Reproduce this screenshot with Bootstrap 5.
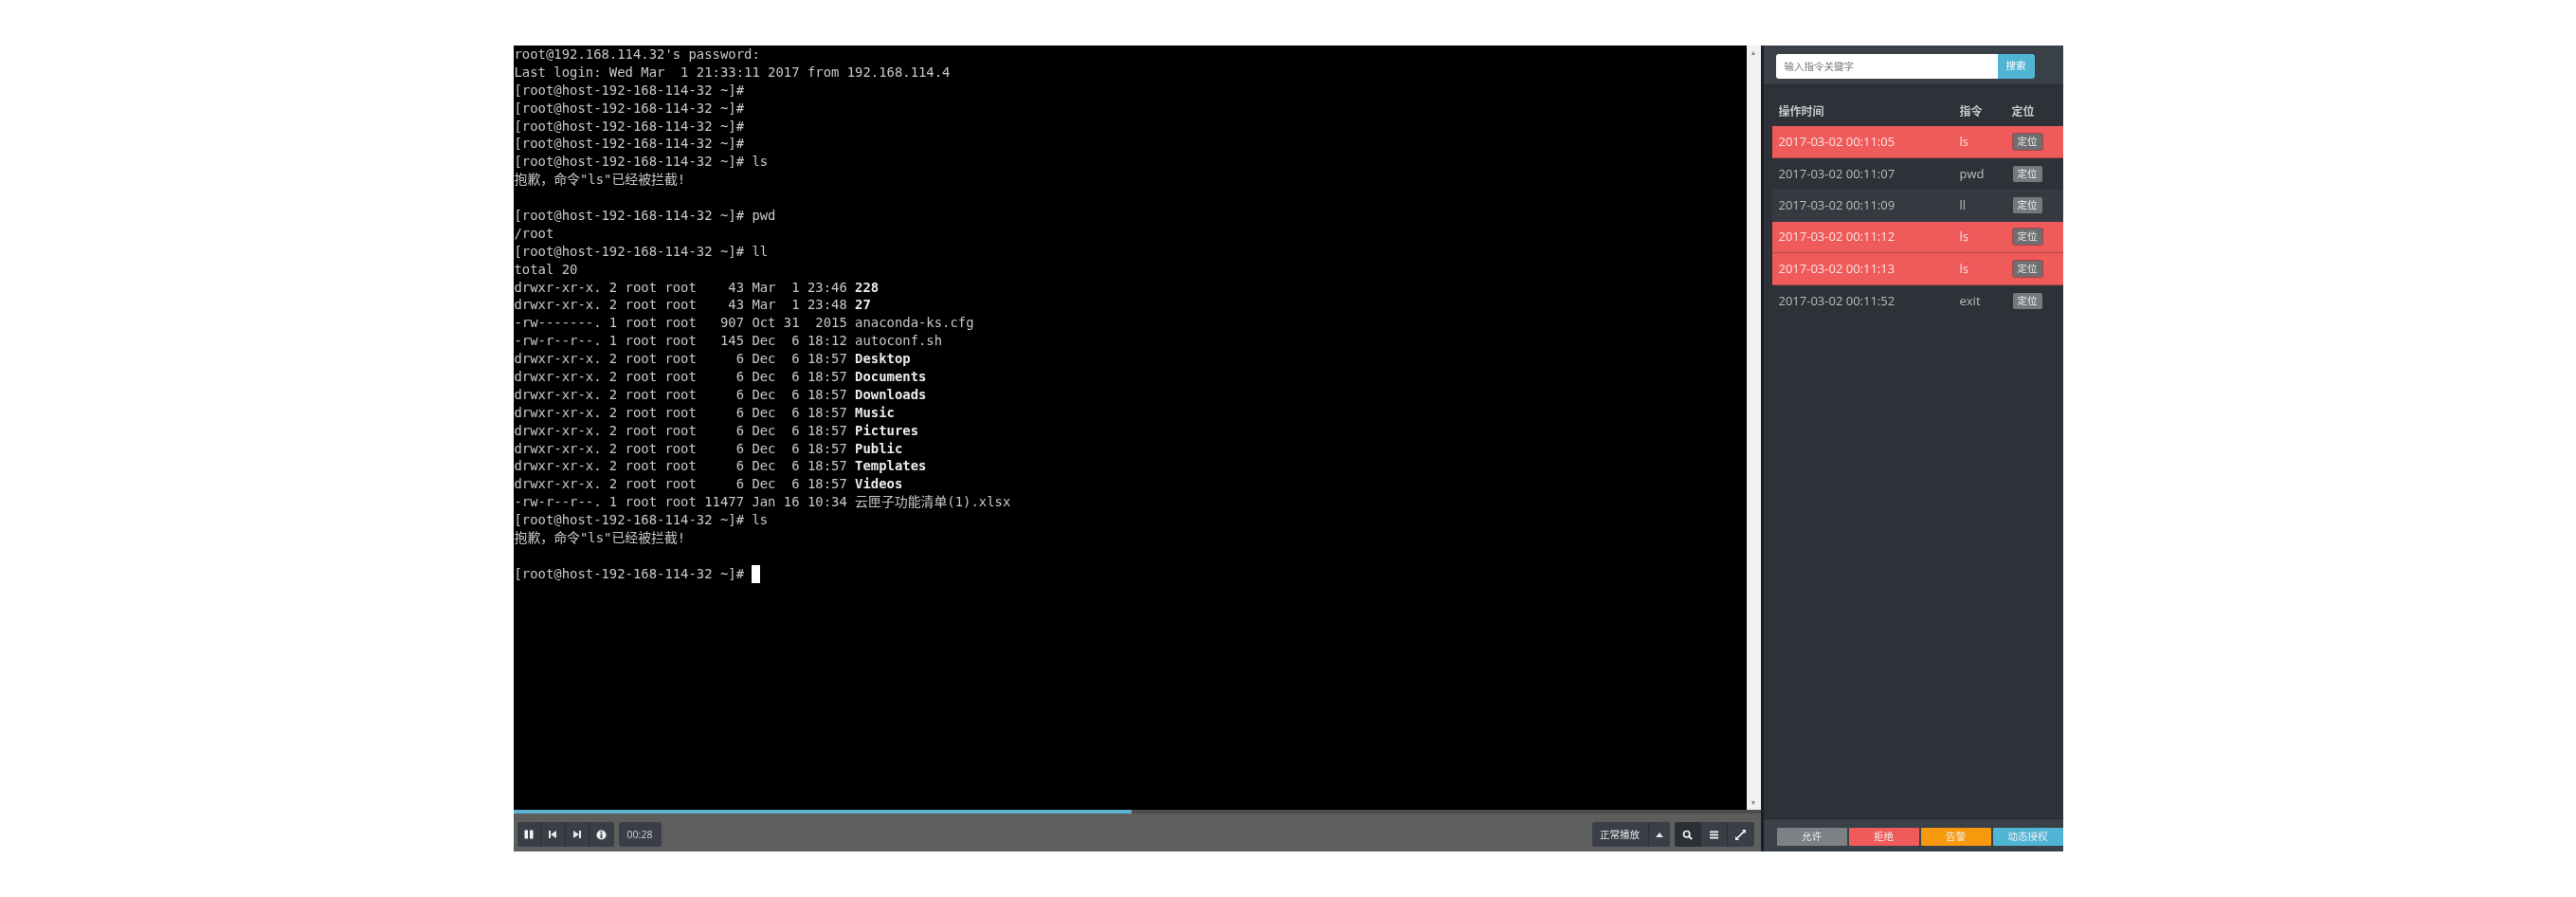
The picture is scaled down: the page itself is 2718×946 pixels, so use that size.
<!DOCTYPE html>
<html lang="zh">
<head>
<meta charset="utf-8">
<title>录像回放</title>
<link href="https://cdn.jsdelivr.net/npm/bootstrap@5.3.0/dist/css/bootstrap.min.css" rel="stylesheet">
<style>
body{background:#fff;margin:0;padding-top:48px;}
.rp-window{width:1635px;height:850px;margin:0 auto;filter:blur(.45px);}
.rp-main{width:1316px;}
.rp-screen{background:#000;min-height:0;}
.rp-term{padding-left:1px;font:13.9px/18.9px "DejaVu Sans Mono","Noto Sans CJK SC",monospace;color:#c8c8c8;}
.rp-ln{height:18.9px;white-space:pre;overflow:hidden;}
.rp-ln b{color:#ececec;font-weight:700;}
.rp-cursor{display:inline-block;width:9px;height:19px;background:#fff;vertical-align:top;}
.rp-scroll{width:15px;background:#f1f1f1;}
.rp-sarrow{height:15px;color:#8a8a8a;font-size:7px;line-height:15px;text-align:center;}
.rp-progress{height:4px;background:#4d4d4d;}
.rp-progress-fill{height:4px;background:#5bb5d0;width:49.6%;}
.rp-ctrl{height:40px;background:#5e5e5e;padding:9px 7px 5px 4px;}
.rp-gap{gap:5px;}
.rp-group{background:#3a3f47;border-radius:3px;height:26px;overflow:hidden;}
.rp-cbtn{height:26px;background:#3a3f47;color:#e8e8e8;font:10.5px/26px "Noto Sans CJK SC",sans-serif;display:flex;align-items:center;justify-content:center;border-right:1px solid #2b2f35;}
.rp-cbtn:last-child{border-right:0;}
.rp-w25{width:25.5px;}
.rp-wtime{width:45px;color:#cfd2d6;font-family:"Open Sans",sans-serif;}
.rp-wspeed{width:60px;}
.rp-wcaret{width:22px;}
.rp-wicon{width:28px;}
.rp-active{background:#2b2f35;}
.rp-split{width:3px;background:#1c1e21;}
.rp-side{width:316px;background:#2e3238;min-width:0;font-family:"Open Sans","Noto Sans CJK SC",sans-serif;}
.rp-search{height:42px;background:#3a4047;border-bottom:1px solid #24272b;padding:9px 30px 0 13px;}
.rp-search .form-control{height:26px;min-height:26px;padding:0 9px;font-size:10.5px;border:0;border-radius:3px 0 0 3px;color:#555;}
.rp-search .form-control::placeholder{color:#777;}
.rp-search .btn{height:26px;width:39px;padding:0;font-size:10.5px;background:#50b4d5;border:0;color:#fff;border-radius:0 3px 3px 0;}
.rp-tablewrap{padding:0 0 0 9px;}
.rp-table{margin:0;width:307px;table-layout:fixed;--bs-table-bg:transparent;--bs-table-color:#bfc2c5;border-collapse:separate;border-spacing:0;}
.rp-col-time{width:191px;}
.rp-col-cmd{width:55px;}
.rp-table th{height:43px;padding:12px 0 0 7px;font-size:12px;font-weight:700;color:#c4c7ca;border:0;vertical-align:middle;}
.rp-table td{height:33.5px;padding:0 0 0 7px;font-size:13px;border:0;vertical-align:middle;color:#b9bcbf;background:#2e3238;}
.rp-table tr.rp-alt td{background:#353a41;}
.rp-table tr.rp-hit td{background:#ef5b5b;color:#fbe3e3;border-bottom:1px solid #b94545;}
.rp-locate{display:block;width:31px;height:17px;padding:0;font-size:10.5px;line-height:17px;background:#767a7f;border:0;border-radius:2px;color:#eee;margin-left:1px;}
.rp-hit .rp-locate{box-shadow:0 0 0 1px #a94444;background:#6f6f72;}
.rp-actions{height:35px;background:#3a4047;border-top:1px solid #24272b;padding:9px 0 6px 14px;gap:2px;}
.rp-act{flex:1;height:19px;padding:0;border:0;border-radius:1px;font-size:10.5px;line-height:19px;color:#eee;}
.rp-gray{background:#7c8186;}
.rp-red{background:#ef5b5b;}
.rp-orange{background:#f7990c;}
.rp-blue{background:#50b4d5;}
</style>
</head>
<body>
<div class="rp-window d-flex">
  <div class="rp-main d-flex flex-column">
    <div class="rp-screen d-flex flex-grow-1">
      <div class="rp-term flex-grow-1">
        <div class="rp-ln">root@192.168.114.32's password:</div>
        <div class="rp-ln">Last login: Wed Mar  1 21:33:11 2017 from 192.168.114.4</div>
        <div class="rp-ln">[root@host-192-168-114-32 ~]#</div>
        <div class="rp-ln">[root@host-192-168-114-32 ~]#</div>
        <div class="rp-ln">[root@host-192-168-114-32 ~]#</div>
        <div class="rp-ln">[root@host-192-168-114-32 ~]#</div>
        <div class="rp-ln">[root@host-192-168-114-32 ~]# ls</div>
        <div class="rp-ln">抱歉，命令"ls"已经被拦截!</div>
        <div class="rp-ln"> </div>
        <div class="rp-ln">[root@host-192-168-114-32 ~]# pwd</div>
        <div class="rp-ln">/root</div>
        <div class="rp-ln">[root@host-192-168-114-32 ~]# ll</div>
        <div class="rp-ln">total 20</div>
        <div class="rp-ln">drwxr-xr-x. 2 root root    43 Mar  1 23:46 <b>228</b></div>
        <div class="rp-ln">drwxr-xr-x. 2 root root    43 Mar  1 23:48 <b>27</b></div>
        <div class="rp-ln">-rw-------. 1 root root   907 Oct 31  2015 anaconda-ks.cfg</div>
        <div class="rp-ln">-rw-r--r--. 1 root root   145 Dec  6 18:12 autoconf.sh</div>
        <div class="rp-ln">drwxr-xr-x. 2 root root     6 Dec  6 18:57 <b>Desktop</b></div>
        <div class="rp-ln">drwxr-xr-x. 2 root root     6 Dec  6 18:57 <b>Documents</b></div>
        <div class="rp-ln">drwxr-xr-x. 2 root root     6 Dec  6 18:57 <b>Downloads</b></div>
        <div class="rp-ln">drwxr-xr-x. 2 root root     6 Dec  6 18:57 <b>Music</b></div>
        <div class="rp-ln">drwxr-xr-x. 2 root root     6 Dec  6 18:57 <b>Pictures</b></div>
        <div class="rp-ln">drwxr-xr-x. 2 root root     6 Dec  6 18:57 <b>Public</b></div>
        <div class="rp-ln">drwxr-xr-x. 2 root root     6 Dec  6 18:57 <b>Templates</b></div>
        <div class="rp-ln">drwxr-xr-x. 2 root root     6 Dec  6 18:57 <b>Videos</b></div>
        <div class="rp-ln">-rw-r--r--. 1 root root 11477 Jan 16 10:34 云匣子功能清单(1).xlsx</div>
        <div class="rp-ln">[root@host-192-168-114-32 ~]# ls</div>
        <div class="rp-ln">抱歉，命令"ls"已经被拦截!</div>
        <div class="rp-ln"> </div>
        <div class="rp-ln">[root@host-192-168-114-32 ~]# <span class="rp-cursor"></span></div>
      </div>
      <div class="rp-scroll d-flex flex-column justify-content-between">
        <div class="rp-sarrow">▲</div>
        <div class="rp-sarrow">▼</div>
      </div>
    </div>
    <div class="rp-progress"><div class="rp-progress-fill"></div></div>
    <div class="rp-ctrl d-flex justify-content-between">
      <div class="d-flex rp-gap">
        <div class="rp-group d-flex">
          <div class="rp-cbtn rp-w25"><svg width="12" height="12" viewBox="0 0 12 12" fill="#f4f4f4"><rect x="1.500" y="1.500" width="3.500" height="9"/><rect x="7" y="1.500" width="3.500" height="9"/></svg></div>
          <div class="rp-cbtn rp-w25"><svg width="10" height="10" viewBox="0 0 10 10" fill="#e8e8e8"><rect x="1" y="1" width="2" height="8"/><path d="M9 1v8L3 5z"/></svg></div>
          <div class="rp-cbtn rp-w25"><svg width="10" height="10" viewBox="0 0 10 10" fill="#e8e8e8"><rect x="7" y="1" width="2" height="8"/><path d="M1 1v8l6-4z"/></svg></div>
          <div class="rp-cbtn rp-w25"><svg width="11" height="11" viewBox="0 0 12 12"><circle cx="6" cy="6" r="5.500" fill="#f0f0f0"/><rect x="5" y="2" width="2" height="2" fill="#3a3f47"/><rect x="5" y="5" width="2" height="5" fill="#3a3f47"/></svg></div>
        </div>
        <div class="rp-group d-flex"><div class="rp-cbtn rp-wtime">00:28</div></div>
      </div>
      <div class="d-flex rp-gap">
        <div class="rp-group d-flex">
          <div class="rp-cbtn rp-wspeed">正常播放</div>
          <div class="rp-cbtn rp-wcaret"><svg width="8" height="5" viewBox="0 0 8 5" fill="#e8e8e8"><path d="M4 0l4 5H0z"/></svg></div>
        </div>
        <div class="rp-group d-flex">
          <div class="rp-cbtn rp-wicon rp-active"><svg width="11" height="11" viewBox="0 0 13 13" fill="none" stroke="#f2f2f2"><circle cx="5.500" cy="5.500" r="3.700" stroke-width="2"/><path d="M8.500 8.500l3.500 3.500" stroke-width="2.400"/></svg></div>
          <div class="rp-cbtn rp-wicon"><svg width="11" height="9" viewBox="0 0 12 10" fill="#eee"><rect x="1" y="0.500" width="10" height="2"/><rect x="1" y="4" width="10" height="2"/><rect x="1" y="7.500" width="10" height="2"/></svg></div>
          <div class="rp-cbtn rp-wicon"><svg width="11" height="11" viewBox="0 0 12 12" fill="#eee"><path d="M7.500 0H12v4.500l-1.600-1.600-7.500 7.500L4.500 12H0V7.500l1.600 1.600 7.500-7.500z"/></svg></div>
        </div>
      </div>
    </div>
  </div>
  <div class="rp-split"></div>
  <div class="rp-side d-flex flex-column">
    <div class="rp-search">
      <div class="input-group flex-nowrap">
        <input class="form-control" type="text" placeholder="输入指令关键字">
        <button class="btn" type="button">搜索</button>
      </div>
    </div>
    <div class="rp-tablewrap flex-grow-1">
      <table class="table rp-table">
        <colgroup><col class="rp-col-time"><col class="rp-col-cmd"><col></colgroup>
        <thead><tr><th>操作时间</th><th>指令</th><th>定位</th></tr></thead>
        <tbody>
          <tr class="rp-hit"><td>2017-03-02 00:11:05</td><td>ls</td><td><button class="btn rp-locate" type="button">定位</button></td></tr>
          <tr><td>2017-03-02 00:11:07</td><td>pwd</td><td><button class="btn rp-locate" type="button">定位</button></td></tr>
          <tr class="rp-alt"><td>2017-03-02 00:11:09</td><td>ll</td><td><button class="btn rp-locate" type="button">定位</button></td></tr>
          <tr class="rp-hit"><td>2017-03-02 00:11:12</td><td>ls</td><td><button class="btn rp-locate" type="button">定位</button></td></tr>
          <tr class="rp-hit"><td>2017-03-02 00:11:13</td><td>ls</td><td><button class="btn rp-locate" type="button">定位</button></td></tr>
          <tr><td>2017-03-02 00:11:52</td><td>exit</td><td><button class="btn rp-locate" type="button">定位</button></td></tr>
        </tbody>
      </table>
    </div>
    <div class="rp-actions d-flex">
      <button class="btn rp-act rp-gray" type="button">允许</button>
      <button class="btn rp-act rp-red" type="button">拒绝</button>
      <button class="btn rp-act rp-orange" type="button">告警</button>
      <button class="btn rp-act rp-blue" type="button">动态授权</button>
    </div>
  </div>
</div>
</body>
</html>
